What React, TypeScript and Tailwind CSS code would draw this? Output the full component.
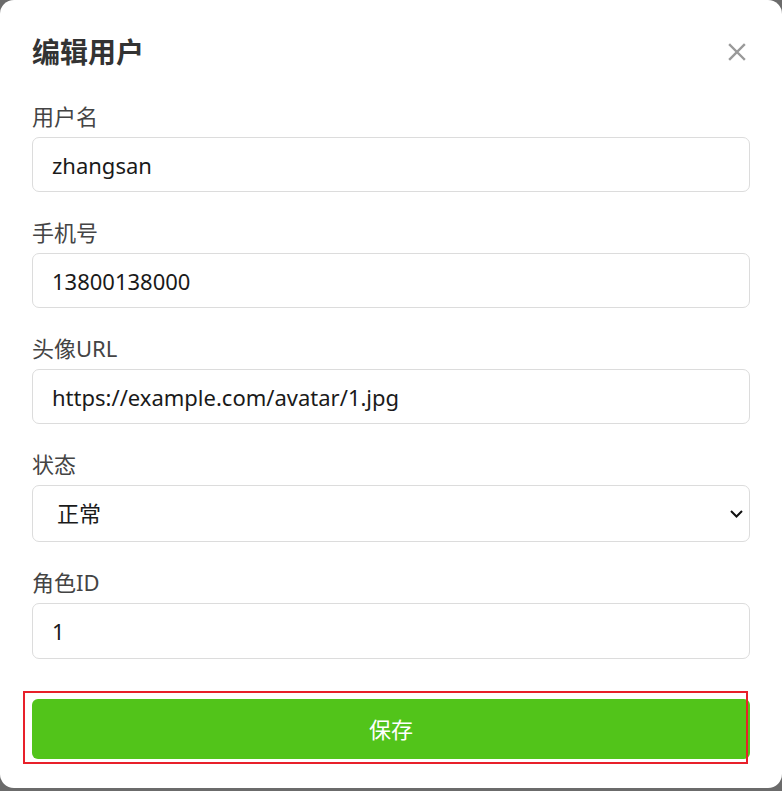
import React from "react";

const font = { fontFamily: '"Noto Sans", "Noto Sans CJK SC", sans-serif' };

function Field({ label, value, tall }: { label: string; value: string; tall?: boolean }) {
  return (
    <div className="flex flex-col">
      <label className="mb-[6px] text-[22px] leading-[30px] text-[#444]">{label}</label>
      <input
        defaultValue={value}
        className={
          tall
            ? "h-[56px] w-full rounded-[7px] border border-[#dcdcdc] bg-white px-[19px] text-[22px] text-[#1a1a1a] outline-none"
            : "h-[55px] w-full rounded-[7px] border border-[#dcdcdc] bg-white px-[19px] text-[22px] text-[#1a1a1a] outline-none"
        }
      />
    </div>
  );
}

export default function App() {
  return (
    <div className="min-h-[791px] bg-[#6b6b6b]" style={font}>
      <div className="h-[788px] rounded-[14px] bg-white px-[32px] pt-[34px]">
        <div className="flex h-[36px] items-center justify-between">
          <h2 className="text-[28px] font-bold leading-[36px] text-[#333]">编辑用户</h2>
          <button className="mr-[4px] flex h-[18px] w-[18px] items-center justify-center text-[#999]">
            <svg viewBox="0 0 18 18" className="h-[18px] w-[18px]" stroke="currentColor" strokeWidth="2.4" strokeLinecap="square">
              <path d="M2 2 L16 16 M16 2 L2 16" />
            </svg>
          </button>
        </div>

        <div className="mt-[31px] flex flex-col gap-[25px]">
          <Field label="用户名" value="zhangsan" />
          <Field label="手机号" value="13800138000" />
          <Field label="头像URL" value="https://example.com/avatar/1.jpg" />
          <div className="flex flex-col">
            <label className="mb-[6px] text-[22px] leading-[30px] text-[#444]">状态</label>
            <div className="relative">
              <select
                defaultValue="1"
                className="h-[57px] w-full appearance-none rounded-[7px] border border-[#dcdcdc] bg-white pl-[24px] text-[22px] text-[#1a1a1a] outline-none"
              >
                <option value="1">正常</option>
                <option value="0">禁用</option>
              </select>
              <svg
                viewBox="0 0 13 8"
                className="pointer-events-none absolute right-[7px] top-[25px] h-[8px] w-[13px]"
                fill="none"
                stroke="#111"
                strokeWidth="2"
              >
                <path d="M1 1 L6.5 6.5 L12 1" />
              </svg>
            </div>
          </div>
          <Field label="角色ID" value="1" tall />
        </div>

        <div className="relative mt-[40px]">
          <button className="h-[60px] w-full rounded-[6px] bg-[#52c41a] text-[22px] text-white">保存</button>
          <div className="pointer-events-none absolute -left-[9px] -top-[8px] -bottom-[5px] right-[2px] border-2 border-[#e8202a]" />
        </div>
      </div>
    </div>
  );
}
